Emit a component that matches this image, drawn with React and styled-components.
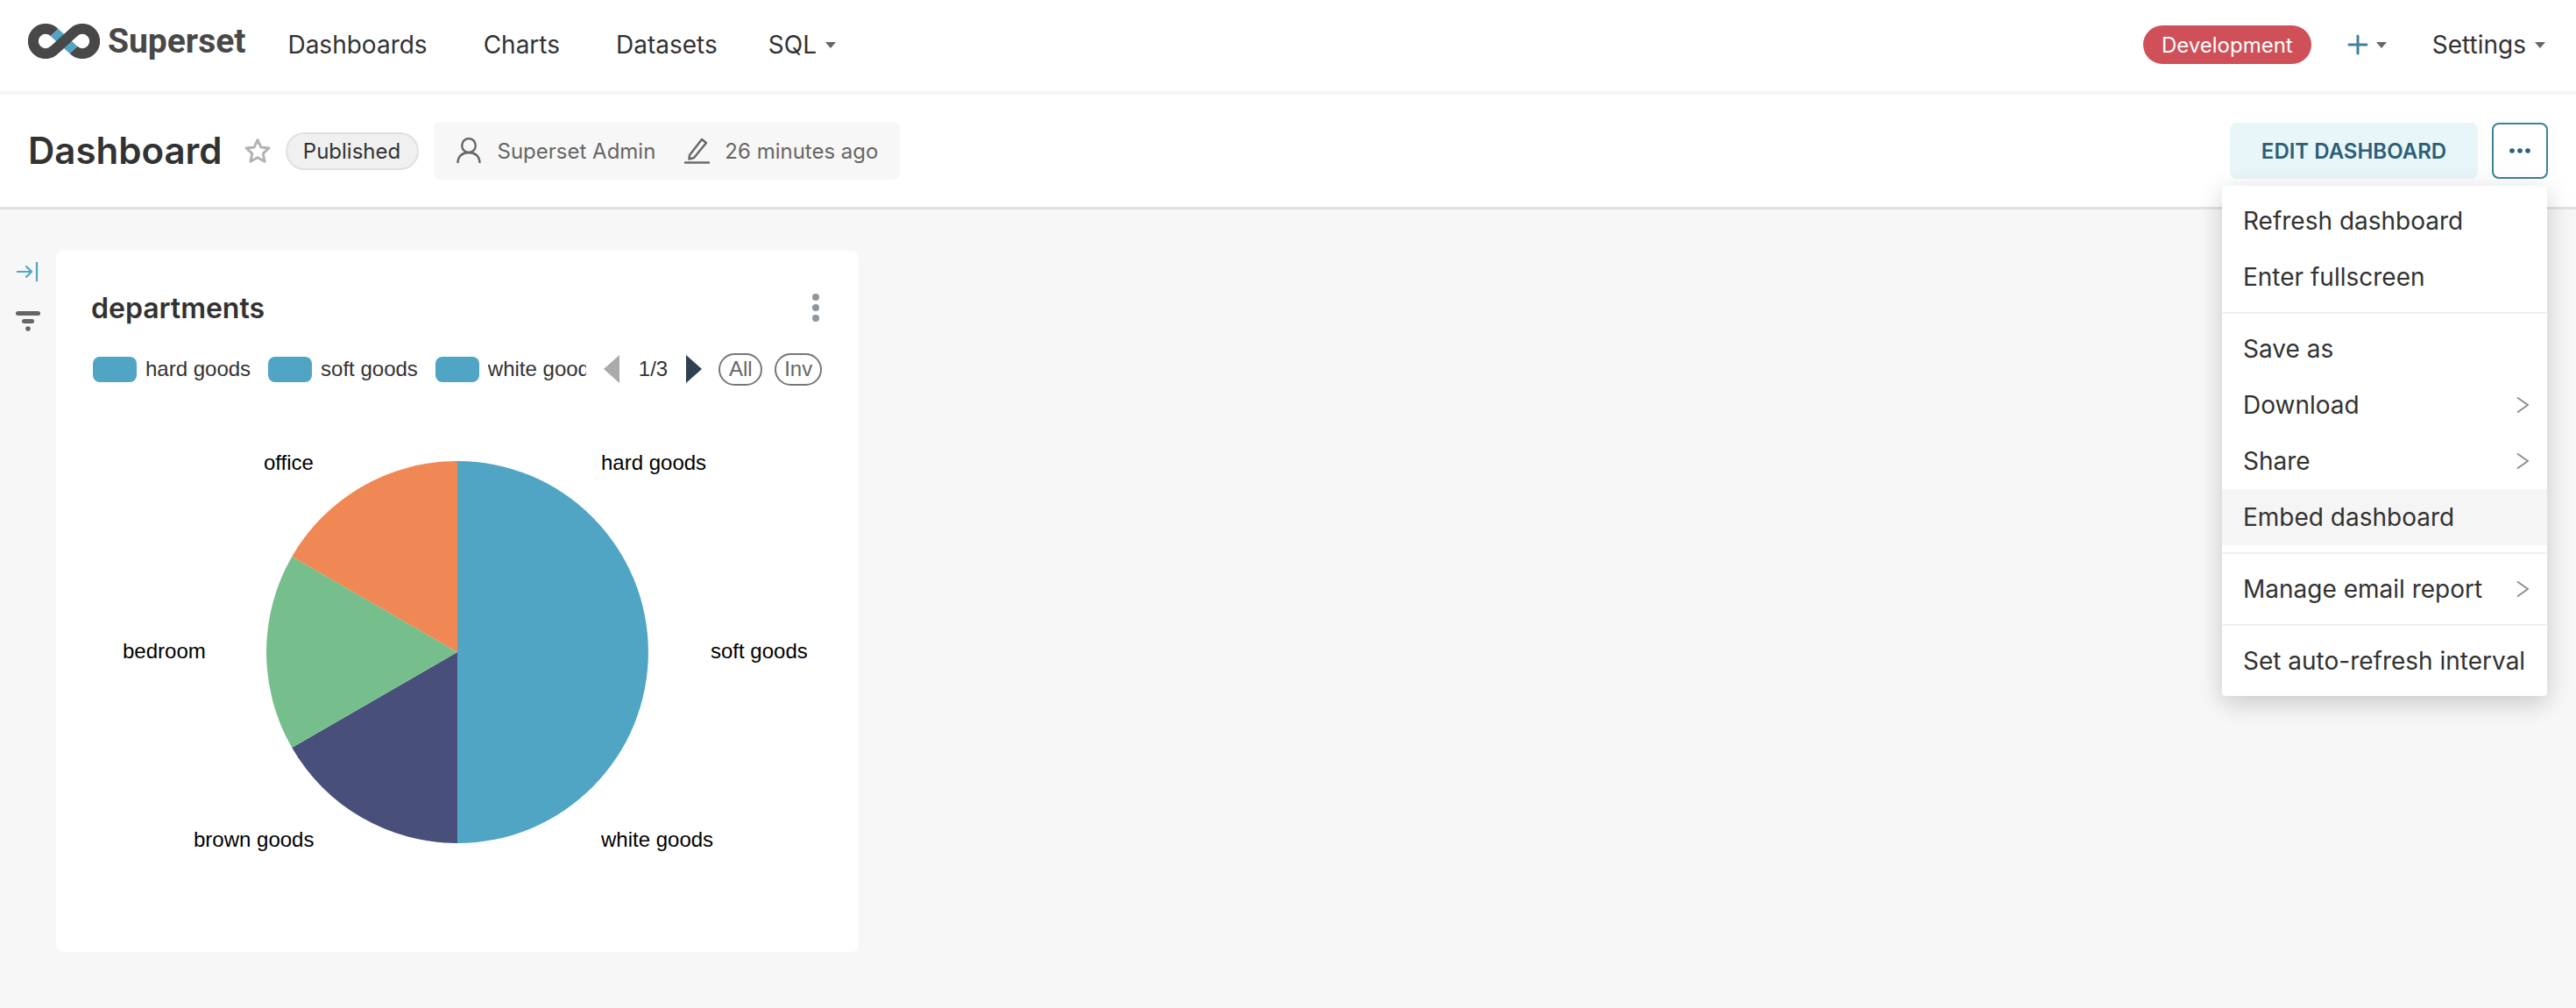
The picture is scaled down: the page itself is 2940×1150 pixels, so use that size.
import React from "react";
import styled, { createGlobalStyle } from "styled-components";

const GlobalStyle = createGlobalStyle`
  html, body {
    margin: 0;
    padding: 0;
    background: #f7f7f7;
    font-family: Inter, "Liberation Sans", sans-serif;
    color: #323232;
  }
  * { box-sizing: border-box; }
`;

const Page = styled.div`
  width: 2940px;
  height: 1150px;
  overflow: hidden;
  position: relative;
`;

// top nav
const TopBar = styled.header`
  height: 108px;
  padding: 0 35px 2px 32px;
  background: #fff;
  border-bottom: 4px solid #f5f5f5;
  display: flex;
  align-items: center;
`;

const Brand = styled.div`
  display: flex;
  align-items: center;
  gap: 9px;
  margin: 0 48px 8px 0;
`;

const BrandName = styled.span`
  font-family: Roboto, sans-serif;
  font-weight: 700;
  font-size: 39px;
  color: #484848;
`;

const Nav = styled.nav`
  display: flex;
  align-items: center;
  gap: 64px;
  flex: 1;
`;

const NavItem = styled.span`
  font-size: 28px;
  color: #323232;
  display: inline-flex;
  align-items: center;
  gap: 10px;
  ${(props) => props.$tight && `margin-left: -6px;`}
`;

const Caret = styled.i`
  display: inline-block;
  width: 0;
  height: 0;
  border-left: 6px solid transparent;
  border-right: 6px solid transparent;
  border-top: 7px solid #666;
`;

const EnvPill = styled.span`
  width: 192px;
  height: 44px;
  border-radius: 22px;
  background: #cf5059;
  color: #fff;
  font-size: 24px;
  display: flex;
  align-items: center;
  justify-content: center;
  margin-right: 41px;
`;

const PlusMenu = styled.span`
  display: inline-flex;
  align-items: center;
  gap: 9px;
  margin-right: 52px;
`;

// dashboard header
const SubBar = styled.section`
  height: 131px;
  background: #fff;
  border-bottom: 3px solid #e0e0e0;
  display: flex;
  align-items: center;
  padding: 0 32px;
`;

const Title = styled.h1`
  margin: 0 24px 0 0;
  font-size: 42px;
  line-height: 1;
  font-weight: 600;
  color: #323232;
`;

const StatusPill = styled.span`
  width: 152px;
  height: 43px;
  margin: 0 17px 0 16px;
  border-radius: 22px;
  background: #f0f0f0;
  border: 2px solid #e0e0e0;
  font-size: 24px;
  display: flex;
  align-items: center;
  justify-content: center;
`;

const MetaBox = styled.div`
  width: 532px;
  height: 66px;
  border-radius: 8px;
  background: #f7f7f7;
  display: flex;
  align-items: center;
  padding-left: 26px;
  color: #666;
  font-size: 24px;
`;

const MetaText = styled.span`
  margin-left: ${(props) => props.$left}px;
  margin-right: ${(props) => props.$right || 0}px;
`;

const Spacer = styled.div`
  flex: 1;
`;

const EditButton = styled.button`
  width: 283px;
  height: 64px;
  border: none;
  border-radius: 8px;
  background: #e9f6f9;
  color: #2c5f78;
  font-family: inherit;
  font-size: 24px;
  font-weight: 600;
`;

const MoreButton = styled.button`
  width: 64px;
  height: 64px;
  margin-left: 16px;
  border: 2px solid #3d8199;
  border-radius: 8px;
  background: #fff;
  display: flex;
  align-items: center;
  justify-content: center;
  padding: 0;
`;

// dropdown over the page
const Menu = styled.ul`
  position: absolute;
  left: 2536px;
  top: 212px;
  width: 371px;
  margin: 0;
  padding: 8px 0;
  list-style: none;
  background: #fff;
  border-radius: 4px;
  box-shadow: 0 6px 32px rgba(0, 0, 0, 0.14), 0 12px 24px rgba(0, 0, 0, 0.06);
`;

const MenuRow = styled.li`
  height: 64px;
  padding: 0 21px 0 24px;
  display: flex;
  align-items: center;
  justify-content: space-between;
  font-size: 28px;
  white-space: nowrap;
  color: #323232;
  background: ${(props) => (props.$hover ? "#f5f5f5" : "#fff")};
`;

const MenuRule = styled.li`
  height: 2px;
  margin: 8px 0;
  background: #f0f0f0;
`;

// content
const Body = styled.main`
  display: flex;
  align-items: flex-start;
  padding-top: 47px;
`;

const Rail = styled.aside`
  width: 64px;
  padding: 13px 0 0 18px;
  display: flex;
  flex-direction: column;
  gap: 34px;
`;

const Card = styled.article`
  width: 916px;
  height: 800px;
  background: #fff;
  border-radius: 8px;
  padding: 47px 40px 0;
`;

const CardHead = styled.div`
  display: flex;
  align-items: center;
  justify-content: space-between;
  height: 36px;
  margin-bottom: 33px;
`;

const CardTitle = styled.h2`
  margin: 0;
  font-size: 32px;
  font-weight: 600;
  color: #323232;
`;

const Kebab = styled.div`
  display: flex;
  flex-direction: column;
  gap: 4px;
  margin-right: 5px;
`;

const Dot = styled.span`
  width: 8px;
  height: 8px;
  border-radius: 50%;
  background: #8e979e;
`;

const Legend = styled.div`
  display: flex;
  align-items: center;
  height: 38px;
  padding-left: 2px;
  font-family: "Liberation Sans", Arial, sans-serif;
  font-size: 24px;
  color: #333;
`;

const Swatch = styled.span`
  width: 50px;
  height: 29px;
  border-radius: 8px;
  background: #50a5c5;
  margin-right: 10px;
  flex: none;
`;

const LegendLabel = styled.span`
  margin-right: 20px;
  white-space: nowrap;
  flex: none;
  ${(props) => props.$clip && `width: 112px; overflow: hidden;`}
`;

const Pager = styled.span`
  margin: 0 21px 0 22px;
`;

const Triangle = styled.i`
  width: 0;
  height: 0;
  flex: none;
  border-top: 16px solid transparent;
  border-bottom: 16px solid transparent;
  ${(props) =>
    props.$left
      ? `border-right: 18px solid #aaa;`
      : `border-left: 18px solid #2e4052;`}
`;

const LegendToggle = styled.span`
  height: 37px;
  width: ${(props) => props.$width}px;
  margin-left: ${(props) => props.$gap}px;
  border: 2px solid #777;
  border-radius: 19px;
  display: flex;
  align-items: center;
  justify-content: center;
  color: #666;
  flex: none;
`;

const PieChart = styled.svg`
  display: block;
  margin: 27px 0 0 -40px;
`;

const PieLabel = styled.text`
  font-family: "Liberation Sans", Arial, sans-serif;
  font-size: 24px;
  fill: #000;
  dominant-baseline: central;
`;

const Logo = () => (
  <svg width="82" height="40" viewBox="0 0 82 40" fill="none">
    <path d="M30 10 L52 30" stroke="#50a5c5" strokeWidth="12" />
    <path
      d="M30 10 A14.14 14.14 0 1 0 30 30 L52 10 A14.14 14.14 0 1 1 52 30"
      stroke="#484848"
      strokeWidth="12"
    />
  </svg>
);

const StarIcon = () => (
  <svg width="32" height="32" viewBox="0 0 32 32" fill="none">
    <path
      d="M16 3.5 L19.8 12 L29 13 L22.2 19.2 L24.1 28.3 L16 23.7 L7.9 28.3 L9.8 19.2 L3 13 L12.2 12 Z"
      stroke="#b2b2b2"
      strokeWidth="3"
      strokeLinejoin="round"
    />
  </svg>
);

const PersonIcon = () => (
  <svg width="28" height="30" viewBox="0 0 28 30" fill="none" stroke="#666" strokeWidth="2.4">
    <ellipse cx="14" cy="9" rx="7.8" ry="8" />
    <path d="M1.5 29 C1.5 21 7 17 14 17 C21 17 26.5 21 26.5 29" />
  </svg>
);

const PencilIcon = () => (
  <svg width="29" height="30" viewBox="0 0 29 30" fill="none" stroke="#666" strokeWidth="2.4">
    <path d="M6 20 L20 2 L25 6 L11 23 L5.5 24.5 Z" strokeLinejoin="round" />
    <path d="M0 28.5 H29" />
  </svg>
);

const PlusIcon = () => (
  <svg width="24" height="24" viewBox="0 0 24 24" fill="none" stroke="#3f829b" strokeWidth="3" strokeLinecap="round">
    <path d="M12 2 V22 M2 12 H22" />
  </svg>
);

const DotsIcon = () => (
  <svg width="24" height="6" viewBox="0 0 24 6" fill="#2c5f78">
    <circle cx="3" cy="3" r="2.8" />
    <circle cx="12" cy="3" r="2.8" />
    <circle cx="21" cy="3" r="2.8" />
  </svg>
);

const Chevron = () => (
  <svg width="14" height="20" viewBox="0 0 14 20" fill="none" stroke="#8c8c8c" strokeWidth="1.8">
    <path d="M1 1.5 L13 10 L1 18.5" />
  </svg>
);

const CollapseIcon = () => (
  <svg width="26" height="22" viewBox="0 0 26 22" fill="none" stroke="#50a5c5" strokeWidth="2.2">
    <path d="M1 11 H18 M11.5 4.5 L18 11 L11.5 17.5" />
    <path d="M24 0 V22" />
  </svg>
);

const FilterIcon = () => (
  <svg width="28" height="24" viewBox="0 0 28 24" fill="#666">
    <rect x="0" y="0" width="28" height="5" rx="2.5" />
    <rect x="7" y="9" width="14" height="5" rx="2.5" />
    <circle cx="14" cy="20" r="2.8" />
  </svg>
);

const slices = [
  { d: "M0 0 L0 -218 A218 218 0 0 1 0 218 Z", fill: "#50a5c5" },
  { d: "M0 0 L0 218 A218 218 0 0 1 -188.8 109 Z", fill: "#484f7b" },
  { d: "M0 0 L-188.8 109 A218 218 0 0 1 -188.8 -109 Z", fill: "#76bf8c" },
  { d: "M0 0 L-188.8 -109 A218 218 0 0 1 0 -218 Z", fill: "#ef8854" },
];

const pieLabels = [
  { x: 237, y: 60, text: "office" },
  { x: 622, y: 60, text: "hard goods" },
  { x: 747, y: 275, text: "soft goods" },
  { x: 76, y: 275, text: "bedroom" },
  { x: 157, y: 490, text: "brown goods" },
  { x: 622, y: 490, text: "white goods" },
];

const menuGroups = [
  [{ label: "Refresh dashboard" }, { label: "Enter fullscreen" }],
  [
    { label: "Save as" },
    { label: "Download", sub: true },
    { label: "Share", sub: true },
    { label: "Embed dashboard", hover: true },
  ],
  [{ label: "Manage email report", sub: true }],
  [{ label: "Set auto-refresh interval" }],
];

function App() {
  return (
    <Page>
      <GlobalStyle />
      <TopBar>
        <Brand>
          <Logo />
          <BrandName>Superset</BrandName>
        </Brand>
        <Nav>
          <NavItem>Dashboards</NavItem>
          <NavItem>Charts</NavItem>
          <NavItem>Datasets</NavItem>
          <NavItem $tight>
            SQL <Caret />
          </NavItem>
        </Nav>
        <EnvPill>Development</EnvPill>
        <PlusMenu>
          <PlusIcon />
          <Caret />
        </PlusMenu>
        <NavItem>
          Settings <Caret />
        </NavItem>
      </TopBar>

      <SubBar>
        <Title>Dashboard</Title>
        <StarIcon />
        <StatusPill>Published</StatusPill>
        <MetaBox>
          <PersonIcon />
          <MetaText $left={19} $right={33}>Superset Admin</MetaText>
          <PencilIcon />
          <MetaText $left={17}>26 minutes ago</MetaText>
        </MetaBox>
        <Spacer />
        <EditButton>EDIT DASHBOARD</EditButton>
        <MoreButton>
          <DotsIcon />
        </MoreButton>
      </SubBar>

      <Body>
        <Rail>
          <CollapseIcon />
          <FilterIcon />
        </Rail>
        <Card>
          <CardHead>
            <CardTitle>departments</CardTitle>
            <Kebab>
              <Dot />
              <Dot />
              <Dot />
            </Kebab>
          </CardHead>
          <Legend>
            <Swatch />
            <LegendLabel>hard goods</LegendLabel>
            <Swatch />
            <LegendLabel>soft goods</LegendLabel>
            <Swatch />
            <LegendLabel $clip>white goods</LegendLabel>
            <Triangle $left />
            <Pager>1/3</Pager>
            <Triangle />
            <LegendToggle $width={50} $gap={19}>All</LegendToggle>
            <LegendToggle $width={54} $gap={14}>Inv</LegendToggle>
          </Legend>
          <PieChart width="916" height="540" viewBox="0 0 916 540">
            <g transform="translate(458 277)">
              {slices.map((s) => (
                <path key={s.fill} d={s.d} fill={s.fill} />
              ))}
            </g>
            {pieLabels.map((l) => (
              <PieLabel key={l.text} x={l.x} y={l.y}>
                {l.text}
              </PieLabel>
            ))}
          </PieChart>
        </Card>
      </Body>

      <Menu>
        {menuGroups.map((group, i) => (
          <React.Fragment key={i}>
            {i > 0 && <MenuRule />}
            {group.map((item) => (
              <MenuRow key={item.label} $hover={item.hover}>
                {item.label}
                {item.sub && <Chevron />}
              </MenuRow>
            ))}
          </React.Fragment>
        ))}
      </Menu>
    </Page>
  );
}

export default App;
